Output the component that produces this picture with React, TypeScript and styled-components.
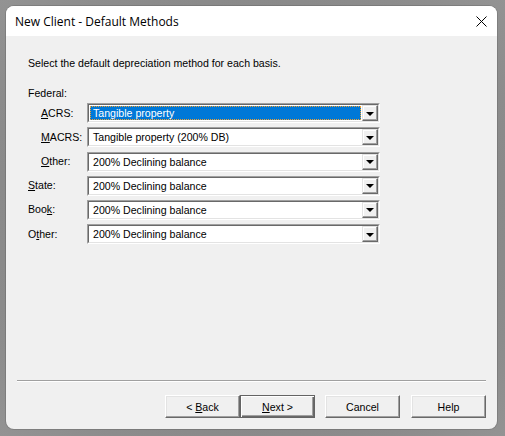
import React from 'react';
import styled, { createGlobalStyle } from 'styled-components';

const GlobalStyle = createGlobalStyle`
  html, body {
    margin: 0;
    padding: 0;
    background: #898989;
  }
  body {
    font-family: "Liberation Sans", Arial, sans-serif;
  }
`;

const Screen = styled.div`
  width: 505px;
  height: 436px;
  padding: 6px 8px 7px 6px;
  box-sizing: border-box;
  background: radial-gradient(ellipse at center, #7a7a7a 0%, #8c8c8c 80%, #939393 100%);
`;

const Window = styled.div`
  width: 491px;
  height: 423px;
  border-radius: 8px;
  overflow: hidden;
  background: #f0f0f0;
  display: flex;
  flex-direction: column;
  box-shadow: 0 0 0 1px rgba(0,0,0,0.12);
`;

const TitleBar = styled.div`
  height: 30px;
  background: #ffffff;
  display: flex;
  align-items: center;
  justify-content: space-between;
  padding: 0 10px 0 9px;
  font-family: "Open Sans", "Noto Sans", sans-serif;
  font-size: 12px;
  color: #000;
`;

const CloseIcon = styled.svg`
  width: 11px;
  height: 11px;
`;

const Body = styled.div`
  flex: 1;
  display: flex;
  flex-direction: column;
  padding: 20px 11px 11px 11px;
  font-size: 10.6px;
  color: #000;
`;

const Intro = styled.div`
  margin-left: 11px;
  height: 14px;
  line-height: 14px;
`;

const Form = styled.div`
  margin-top: 17px;
  margin-left: 11px;
  display: flex;
  flex-direction: column;
  gap: 4.2px;
`;

const GroupLabel = styled.div`
  height: 13px;
  line-height: 13px;
  margin-bottom: -1px;
`;

const Row = styled.div`
  display: flex;
  align-items: center;
  height: 20px;
`;

const Label = styled.div<{ $indent?: boolean }>`
  width: ${p => (p.$indent ? 46 : 59)}px;
  padding-left: ${p => (p.$indent ? 13 : 0)}px;
  line-height: 13px;
`;

const Combo = styled.div`
  width: 293px;
  height: 20px;
  box-sizing: border-box;
  border-style: solid;
  border-width: 1px;
  border-color: #a0a0a0 #ffffff #ffffff #a0a0a0;
  display: flex;
`;

const ComboInner = styled.div`
  flex: 1;
  display: flex;
  background: #ffffff;
  border-style: solid;
  border-width: 1px;
  border-color: #696969 #e3e3e3 #e3e3e3 #696969;
`;

const ComboValue = styled.div<{ $selected?: boolean }>`
  flex: 1;
  margin: 1px;
  padding-left: 3px;
  line-height: 14px;
  color: ${p => (p.$selected ? '#ffffff' : '#000000')};
  background: ${p => (p.$selected ? '#0078d7' : 'transparent')};
  outline: ${p => (p.$selected ? '1px dotted #f0a030' : 'none')};
  outline-offset: -1px;
  white-space: nowrap;
  overflow: hidden;
`;

const DropButton = styled.div`
  width: 16px;
  height: 16px;
  box-sizing: border-box;
  background: #f0f0f0;
  border-style: solid;
  border-width: 1px;
  border-color: #e3e3e3 #696969 #696969 #e3e3e3;
  box-shadow: inset -1px -1px 0 #a0a0a0, inset 1px 1px 0 #ffffff;
  display: flex;
  align-items: center;
  justify-content: center;
`;

const Arrow = styled.div`
  width: 0;
  height: 0;
  border-left: 4px solid transparent;
  border-right: 4px solid transparent;
  border-top: 4px solid #000;
  margin-top: 1px;
`;

const Spacer = styled.div`
  flex: 1;
`;

const Separator = styled.div`
  height: 0;
  border-top: 1px solid #a0a0a0;
  border-bottom: 1px solid #ffffff;
  margin: 0 0 13px 0;
`;

const ButtonRow = styled.div`
  display: flex;
  justify-content: flex-end;
`;

const Button = styled.div<{ $default?: boolean; $gap?: number }>`
  width: 75px;
  height: 23px;
  box-sizing: border-box;
  margin-left: ${p => p.$gap ?? 0}px;
  background: #f0f0f0;
  border: 1px solid;
  border-color: ${p => (p.$default ? '#646464' : '#ffffff #696969 #696969 #ffffff')};
  box-shadow: ${p => (p.$default
    ? 'inset 1px 1px 0 #ffffff, inset -1px -1px 0 #696969, inset -2px -2px 0 #a0a0a0'
    : 'inset -1px -1px 0 #a0a0a0, inset 1px 1px 0 #e3e3e3')};
  display: flex;
  align-items: center;
  justify-content: center;
  white-space: pre;
  color: #000;
`;

const U = styled.span`
  text-decoration: underline;
  text-underline-offset: 1px;
`;

type Field = { label: React.ReactNode; value: string; indent?: boolean; selected?: boolean };

const fields: Field[] = [
  { label: <><U>A</U>CRS:</>, value: 'Tangible property', indent: true, selected: true },
  { label: <><U>M</U>ACRS:</>, value: 'Tangible property (200% DB)', indent: true },
  { label: <><U>O</U>ther:</>, value: '200% Declining balance', indent: true },
  { label: <><U>S</U>tate:</>, value: '200% Declining balance' },
  { label: <>Boo<U>k</U>:</>, value: '200% Declining balance' },
  { label: <>O<U>t</U>her:</>, value: '200% Declining balance' },
];

export default function App() {
  return (
    <>
      <GlobalStyle />
      <Screen>
        <Window>
          <TitleBar>
            <span>New Client - Default Methods</span>
            <CloseIcon viewBox="0 0 11 11">
              <path d="M0.5 0.5 L10.5 10.5 M10.5 0.5 L0.5 10.5" stroke="#000" strokeWidth="1" />
            </CloseIcon>
          </TitleBar>
          <Body>
            <Intro>Select the default depreciation method for each basis.</Intro>
            <Form>
              <GroupLabel>Federal:</GroupLabel>
              {fields.map((f, i) => (
                <Row key={i}>
                  <Label $indent={f.indent}>{f.label}</Label>
                  <Combo>
                    <ComboInner>
                      <ComboValue $selected={f.selected}>{f.value}</ComboValue>
                      <DropButton><Arrow /></DropButton>
                    </ComboInner>
                  </Combo>
                </Row>
              ))}
            </Form>
            <Spacer />
            <Separator />
            <ButtonRow>
              <Button>{'< '}<U>B</U>ack</Button>
              <Button $default><U>N</U>{'ext >'}</Button>
              <Button $gap={10}>Cancel</Button>
              <Button $gap={11}>Help</Button>
            </ButtonRow>
          </Body>
        </Window>
      </Screen>
    </>
  );
}
